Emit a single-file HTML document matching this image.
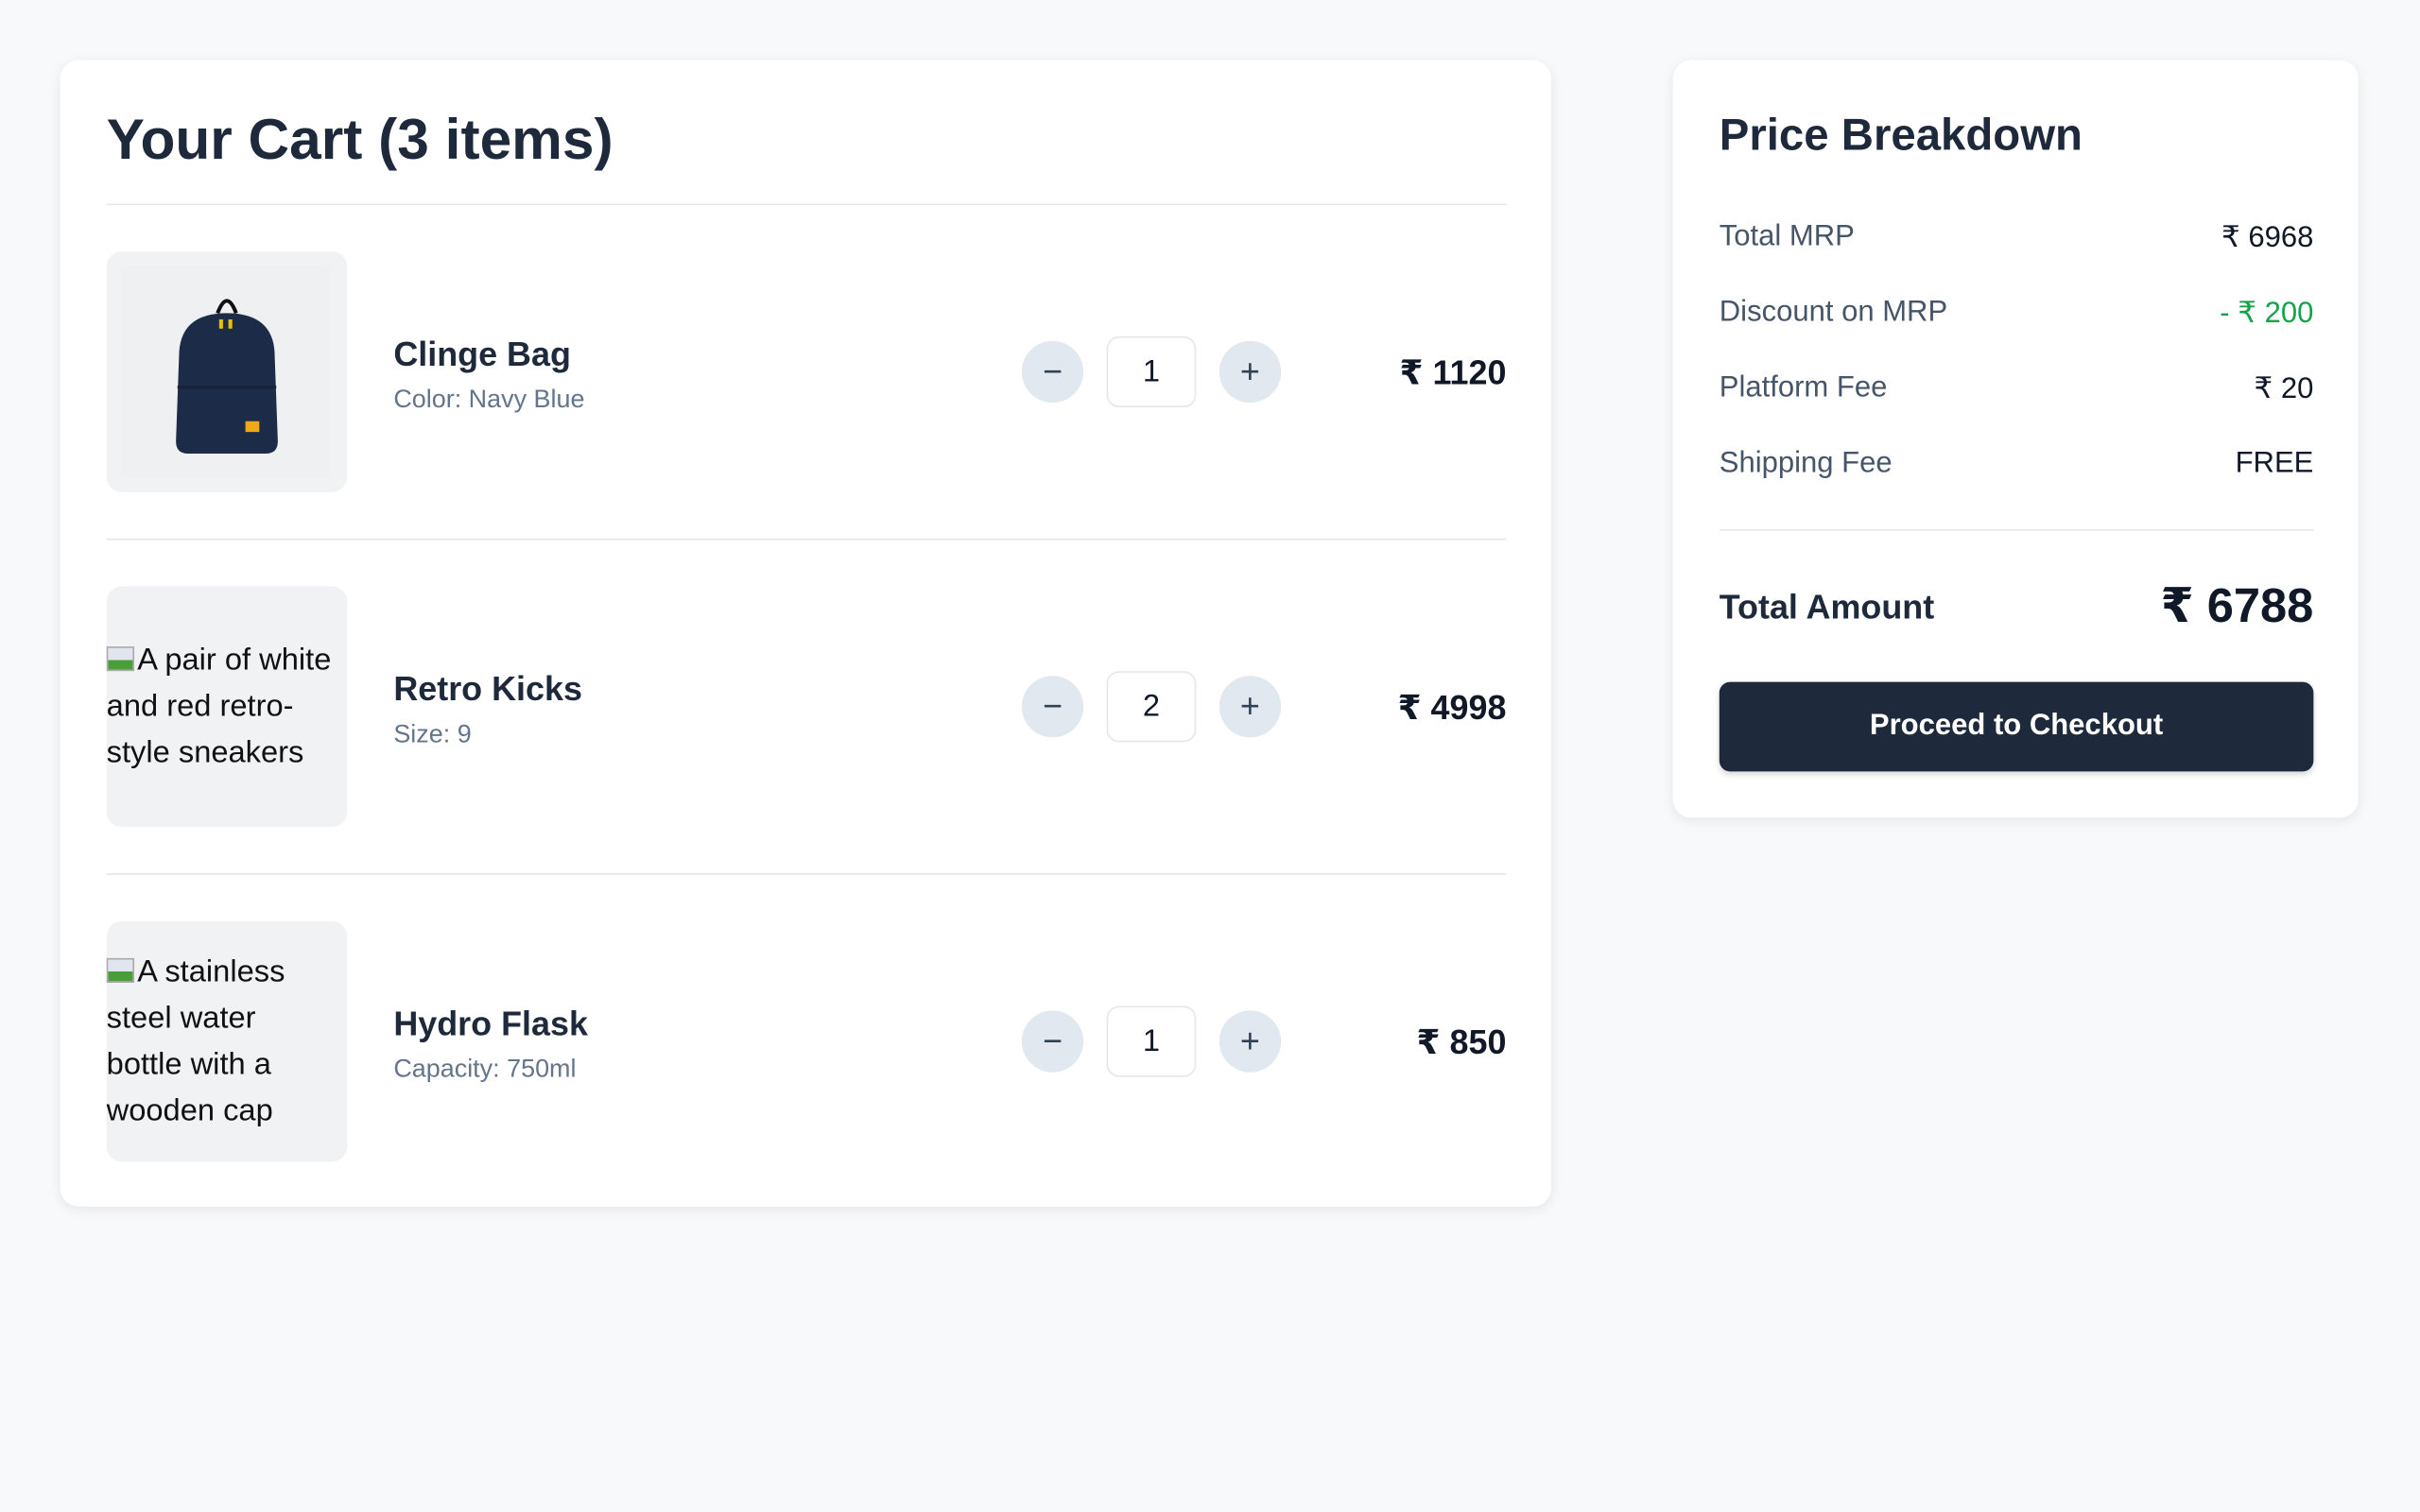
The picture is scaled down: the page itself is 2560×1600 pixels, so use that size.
<!DOCTYPE html>
<html><head><meta charset="utf-8"><style>
*{box-sizing:border-box;margin:0;padding:0}
html,body{width:2560px;height:1600px;overflow:hidden;background:#f8f9fb}
#s{position:absolute;left:0;top:0;width:1568px;height:980px;transform:scale(1.63265);transform-origin:0 0;font-family:"Liberation Sans","DejaVu Sans",sans-serif;color:#1e293b}
.card{position:absolute;background:#fff;border-radius:12px;box-shadow:0 2px 8px rgba(0,0,0,.08)}
.a{position:absolute;white-space:nowrap}
.hr{position:absolute;height:1px;background:#e5e7eb}
.img{position:absolute;left:69px;width:156px;height:156px;background:#f1f2f4;border-radius:10px;display:flex;align-items:center;font-size:20px;line-height:30px;color:#111;overflow:hidden;white-space:nowrap}
.name{font-size:22px;font-weight:bold;color:#1e293b}
.sub{font-size:16.5px;color:#64748b}
.btn{position:absolute;width:40px;height:40px;border-radius:50%;background:#e2e8f0;color:#334155;font-size:22px;display:flex;align-items:center;justify-content:center}
.q{position:absolute;left:717px;width:58px;height:46px;border:1.5px solid #e5e7eb;border-radius:8px;display:flex;align-items:center;justify-content:center;font-size:20px;color:#111827}
.pr{position:absolute;right:592px;font-size:22px;font-weight:bold;color:#111827}
.rl{position:absolute;left:1114px;font-size:19px;color:#475569}
.rv{position:absolute;right:69px;font-size:19px;color:#111827}
.ic{display:inline-block;width:18px;height:16px;background:linear-gradient(#dfe6ee 55%,#4a9e3a 55%);border:1px solid #aaa;vertical-align:-1px;margin-right:2px}
</style></head><body><div id="s">
<div class="card" style="left:39px;top:39px;width:966px;height:743px"></div>
<div class="a" style="left:69px;top:70px;font-size:37px;font-weight:bold;color:#1e293b">Your Cart (3 items)</div>
<div class="hr" style="left:69px;top:132px;width:907px"></div>

<div class="img" style="top:163px">
<svg width="156" height="156" viewBox="0 0 156 156"><rect x="9" y="9" width="136" height="138" fill="#eff0f1"/>
<path d="M72 40 q6-16 12 0" stroke="#111" stroke-width="2.5" fill="none"/>
<path d="M47 68 q0-28 31-28 q31 0 31 28 l2 55 q0 8-8 8 h-50 q-8 0-8-8z" fill="#1c2c48"/>
<path d="M46 88 h64" stroke="#16233a" stroke-width="2"/>
<rect x="90" y="110" width="9" height="7" fill="#f0a818"/>
<rect x="73" y="44" width="2.5" height="6" fill="#e5c200"/><rect x="79" y="44" width="2.5" height="6" fill="#e5c200"/>
</svg></div>
<div class="a name" style="left:255px;top:217px">Clinge Bag</div>
<div class="a sub" style="left:255px;top:250px">Color: Navy Blue</div>
<div class="btn" style="left:662px;top:221px">−</div>
<div class="q" style="top:218px">1</div>
<div class="btn" style="left:790px;top:221px">+</div>
<div class="pr" style="top:229px">₹ 1120</div>
<div class="hr" style="left:69px;top:349px;width:907px"></div>

<div class="img" style="top:380px"><div><span class="ic"></span>A pair of white<br>and red retro-<br>style sneakers</div></div>
<div class="a name" style="left:255px;top:434px">Retro Kicks</div>
<div class="a sub" style="left:255px;top:467px">Size: 9</div>
<div class="btn" style="left:662px;top:438px">−</div>
<div class="q" style="top:435px">2</div>
<div class="btn" style="left:790px;top:438px">+</div>
<div class="pr" style="top:446px">₹ 4998</div>
<div class="hr" style="left:69px;top:566px;width:907px"></div>

<div class="img" style="top:597px"><div><span class="ic"></span>A stainless<br>steel water<br>bottle with a<br>wooden cap</div></div>
<div class="a name" style="left:255px;top:651px">Hydro Flask</div>
<div class="a sub" style="left:255px;top:684px">Capacity: 750ml</div>
<div class="btn" style="left:662px;top:655px">−</div>
<div class="q" style="top:652px">1</div>
<div class="btn" style="left:790px;top:655px">+</div>
<div class="pr" style="top:663px">₹ 850</div>

<div class="card" style="left:1084px;top:39px;width:444px;height:491px"></div>
<div class="a" style="left:1114px;top:72px;font-size:29px;font-weight:bold">Price Breakdown</div>
<div class="rl" style="top:143px">Total MRP</div><div class="rv" style="top:143px">₹ 6968</div>
<div class="rl" style="top:192px">Discount on MRP</div><div class="rv" style="top:192px;color:#16a34a">- ₹ 200</div>
<div class="rl" style="top:241px">Platform Fee</div><div class="rv" style="top:241px">₹ 20</div>
<div class="rl" style="top:290px">Shipping Fee</div><div class="rv" style="top:290px">FREE</div>
<div class="hr" style="left:1114px;top:343px;width:385px"></div>
<div class="a" style="left:1114px;top:381px;font-size:22px;font-weight:bold">Total Amount</div>
<div class="a" style="right:69px;top:375px;font-size:31px;font-weight:bold;color:#111827">₹ 6788</div>
<div class="a" style="left:1114px;top:442px;width:385px;height:58px;background:#1e293b;border-radius:7px;color:#fff;font-size:19px;font-weight:bold;display:flex;align-items:center;justify-content:center;box-shadow:0 2px 4px rgba(0,0,0,.15)">Proceed to Checkout</div>
</div></body></html>
